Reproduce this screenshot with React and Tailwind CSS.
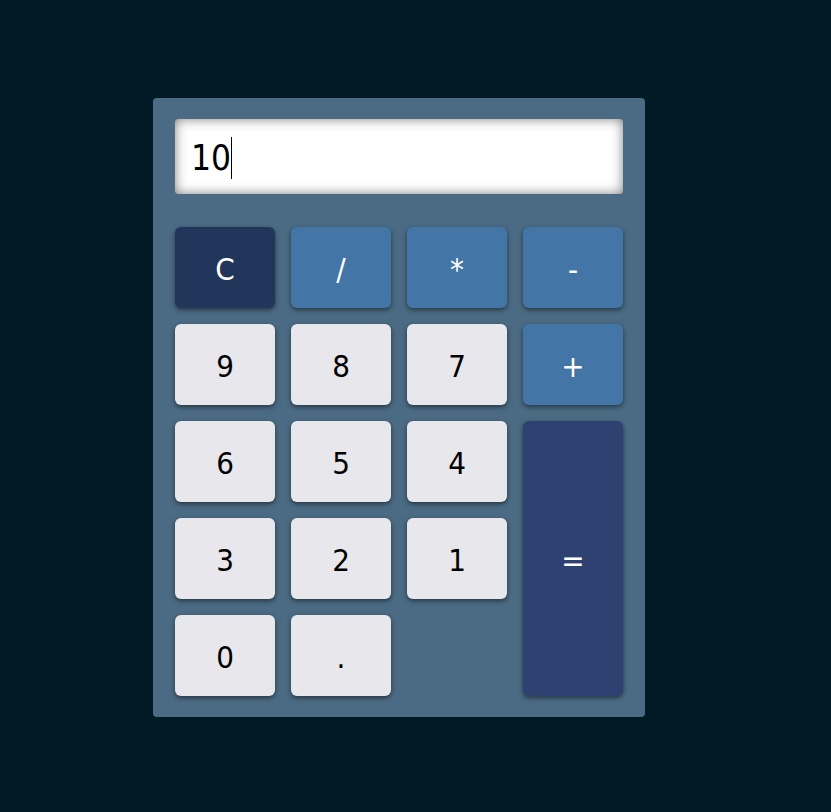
import React from 'react';

const FONT = { fontFamily: '"DejaVu Sans Condensed", "DejaVu Sans", Verdana, sans-serif' };

const KEYS = [
  { label: 'C', kind: 'clear' },
  { label: '/', kind: 'op' },
  { label: '*', kind: 'op' },
  { label: '-', kind: 'op' },
  { label: '9' },
  { label: '8' },
  { label: '7' },
  { label: '+', kind: 'op' },
  { label: '6' },
  { label: '5' },
  { label: '4' },
  { label: '=', kind: 'equals' },
  { label: '3' },
  { label: '2' },
  { label: '1' },
  { label: '0' },
  { label: '.' },
];

const KIND_CLASSES = {
  clear: 'bg-[#22355a] text-white',
  op: 'bg-[#4376a6] text-white',
  equals: 'bg-[#2f4171] text-white row-span-3',
  digit: 'bg-[#e8e7ec] text-black',
};

const Key = ({ label, kind = 'digit' }) => (
  <button
    className={`${KIND_CLASSES[kind]} rounded-md text-[31px] pt-[3px] flex items-center justify-center shadow-[0_2px_5px_rgba(0,0,0,0.5)]`}
    style={FONT}
  >
    {label}
  </button>
);

export default function App() {
  return (
    <div className="min-h-[812px] w-full bg-[#011a25] pt-[98px] pl-[153px]" style={FONT}>
      <div className="w-[492px] bg-[#4b6b84] rounded px-[22px] pt-[21px] pb-[21px]">
        <div className="h-[75px] bg-white rounded shadow-[inset_0_0_12px_rgba(0,0,0,0.5)] flex items-center pl-[16px] pt-[3px]">
          <span className="text-[35px] text-black leading-none">10</span>
          <span className="w-px h-[42px] bg-black" />
        </div>
        <div className="mt-[33px] grid grid-cols-[repeat(4,100px)] auto-rows-[81px] gap-4">
          {KEYS.map((k) => (
            <Key key={k.label} label={k.label} kind={k.kind} />
          ))}
        </div>
      </div>
    </div>
  );
}
